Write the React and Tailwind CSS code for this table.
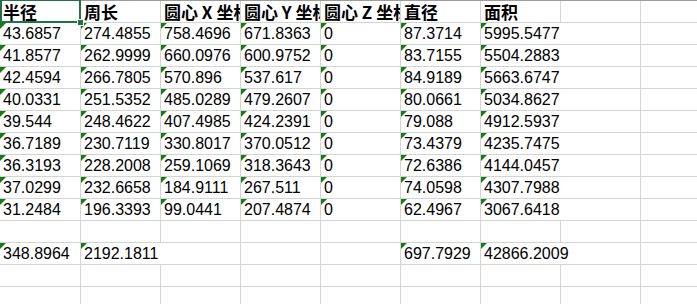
const headers = ["半径", "周长", "圆心 X 坐标", "圆心 Y 坐标", "圆心 Z 坐标", "直径", "面积", "", ""];

const rows = [
  ["43.6857", "274.4855", "758.4696", "671.8363", "0", "87.3714", "5995.5477"],
  ["41.8577", "262.9999", "660.0976", "600.9752", "0", "83.7155", "5504.2883"],
  ["42.4594", "266.7805", "570.896", "537.617", "0", "84.9189", "5663.6747"],
  ["40.0331", "251.5352", "485.0289", "479.2607", "0", "80.0661", "5034.8627"],
  ["39.544", "248.4622", "407.4985", "424.2391", "0", "79.088", "4912.5937"],
  ["36.7189", "230.7119", "330.8017", "370.0512", "0", "73.4379", "4235.7475"],
  ["36.3193", "228.2008", "259.1069", "318.3643", "0", "72.6386", "4144.0457"],
  ["37.0299", "232.6658", "184.9111", "267.511", "0", "74.0598", "4307.7988"],
  ["31.2484", "196.3393", "99.0441", "207.4874", "0", "62.4967", "3067.6418"],
];

const totals = ["348.8964", "2192.1811", "", "", "", "697.7929", "42866.2009"];

// columns whose left gridline is covered by overflowing text
const hiddenInData = [7];
const hiddenInTotals = [2, 7];

function Cell({ index, value, hideLine, header }) {
  return (
    <div
      className={`relative h-full shrink-0 whitespace-nowrap pl-[3px] ${
        index === 0 ? "w-[80px]" : "w-[80px] border-l"
      } ${hideLine ? "border-transparent" : "border-[#d4d4d4]"} ${
        header
          ? "overflow-x-hidden font-bold text-[17px] leading-[21px] font-['Noto_Sans_CJK_SC',sans-serif]"
          : "text-[16px] leading-[21px] font-['Liberation_Sans',Arial,sans-serif]"
      }`}
    >
      {value && !header && (
        <span className="absolute left-0 top-0 h-0 w-0 border-t-[6px] border-r-[6px] border-t-[#127d12] border-r-transparent"></span>
      )}
      {value}
    </div>
  );
}

function Row({ values, hidden = [], header = false }) {
  const cells = [];
  for (let i = 0; i < 9; i++) {
    cells.push(
      <Cell
        key={i}
        index={i}
        value={values[i] || ""}
        hideLine={hidden.includes(i)}
        header={header}
      />
    );
  }
  return (
    <div
      className={`flex h-[22px] border-t ${
        header ? "border-[#9c9c9c]" : "border-[#d4d4d4]"
      }`}
    >
      {cells}
    </div>
  );
}

export default function App() {
  return (
    <div className="relative h-[304px] w-[697px] overflow-hidden bg-white text-black">
      <Row values={headers} header />

      {rows.map((r, i) => (
        <Row key={i} values={r} hidden={hiddenInData} />
      ))}

      <Row values={[]} />
      <Row values={totals} hidden={hiddenInTotals} />
      <Row values={[]} />
      <Row values={[]} />

      {/* active cell A1 */}
      <div className="absolute left-0 top-[-1px] h-[24px] w-[81px] border-2 border-[#217346]"></div>
      <div className="absolute left-[77px] top-[19px] h-[7px] w-[7px] border border-white bg-[#217346]"></div>
    </div>
  );
}
